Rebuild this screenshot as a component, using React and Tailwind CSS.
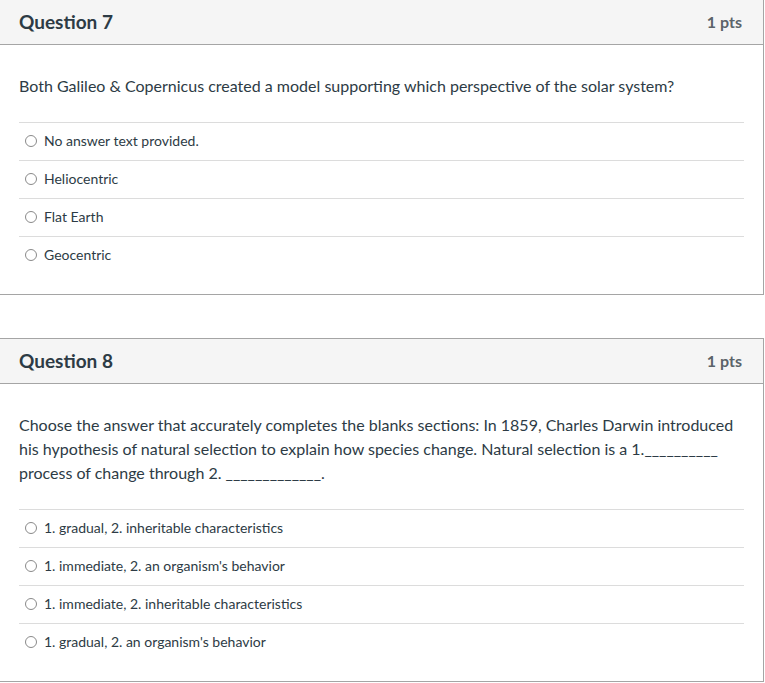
import React from 'react';

const questions = [
  {
    num: 7,
    text: 'Both Galileo & Copernicus created a model supporting which perspective of the solar system?',
    answers: ['No answer text provided.', 'Heliocentric', 'Flat Earth', 'Geocentric'],
    first: true,
  },
  {
    num: 8,
    text: "Choose the answer that accurately completes the blanks sections: In 1859, Charles Darwin introduced his hypothesis of natural selection to explain how species change. Natural selection is a 1.__________ process of change through 2. _____________.",
    answers: [
      '1. gradual, 2. inheritable characteristics',
      "1. immediate, 2. an organism's behavior",
      '1. immediate, 2. inheritable characteristics',
      "1. gradual, 2. an organism's behavior",
    ],
  },
];

function Question({ q }) {
  return (
    <div className={`w-[764px] bg-white border-r border-b border-[#a5a5a5] ${q.first ? '' : 'border-t mt-[43px]'}`}>
      <div className="h-[45px] bg-[#f5f5f5] border-b border-[#a5a5a5] flex items-center justify-between pl-[19px] pr-[21px]">
        <span className="text-[19px] font-bold text-[#2d3b45]">Question {q.num}</span>
        <span className="text-[16px] font-bold text-[#5b6369]">1 pts</span>
      </div>
      <div className="px-[19px] pt-[29px] pb-[20px]">
        <p className="text-[16px] leading-[24px] text-[#2d3b45] pb-[24px]">{q.text}</p>
        <div>
          {q.answers.map((a) => (
            <div key={a} className="h-[38px] border-t border-[#dcdcdc] flex items-center pl-[6px] pb-[2px]">
              <span className="w-[12px] h-[12px] rounded-full border border-[#8a8a8a] bg-white mr-[7px]" />
              <span className="text-[14px] text-[#2d3b45]">{a}</span>
            </div>
          ))}
        </div>
      </div>
    </div>
  );
}

export default function App() {
  return (
    <div className="w-[765px] h-[683px] bg-white overflow-hidden" style={{ fontFamily: 'Lato, "Liberation Sans", sans-serif' }}>
      {questions.map((q) => (
        <Question key={q.num} q={q} />
      ))}
    </div>
  );
}
